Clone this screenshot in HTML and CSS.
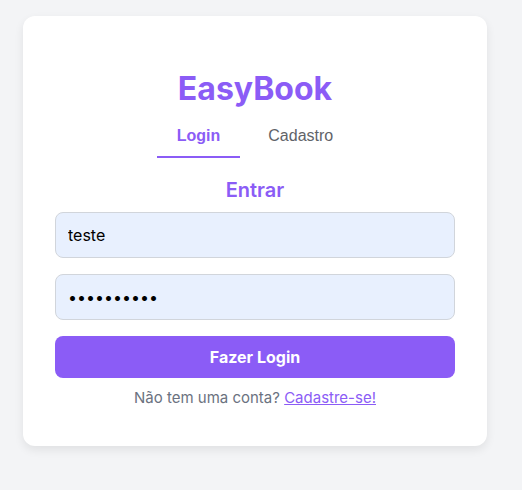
FILE: index.html
```html
<!DOCTYPE html>
<html lang="pt">
<head>
<meta charset="utf-8">
<link rel="stylesheet" href="styles.css">
</head>
<body>
<main class="card">
  <h1 class="brand">EasyBook</h1>
  <nav class="tabs">
    <button class="tab active">Login</button>
    <button class="tab">Cadastro</button>
  </nav>
  <h2 class="heading">Entrar</h2>
  <form class="form">
    <input class="field" type="text" value="teste">
    <input class="field pass" type="password" value="1234567890">
    <button class="submit" type="button">Fazer Login</button>
  </form>
  <p class="footer">Não tem uma conta? <a href="#">Cadastre-se!</a></p>
</main>
</body>
</html>
```
FILE: styles.css
```css
html, body { margin: 0; padding: 0; }
body {
  background: #f3f4f6;
  font-family: Inter, "Noto Sans", sans-serif;
  padding: 16px 0 0 23px;
  height: 490px;
  box-sizing: border-box;
}
.card {
  width: 464px;
  box-sizing: border-box;
  background: #fff;
  border-radius: 12px;
  box-shadow: 0 4px 10px rgba(0,0,0,0.08);
  padding: 54px 32px 38px;
}
.brand {
  margin: 0;
  text-align: center;
  font-size: 32px;
  line-height: 38px;
  font-weight: 700;
  color: #8b5cf6;
}
.tabs {
  display: flex;
  justify-content: center;
  gap: 8px;
  margin-top: 10px;
}
.tab {
  font-family: "Liberation Sans", Arial, sans-serif;
  background: none;
  border: none;
  border-bottom: 2px solid transparent;
  padding: 8px 20px 10px;
  font-size: 16px;
  line-height: 20px;
  color: #5f6368;
  cursor: pointer;
}
.tab.active {
  color: #8b5cf6;
  font-weight: 700;
  border-bottom-color: #8b5cf6;
}
.heading {
  margin: 20px 0 10px;
  text-align: center;
  font-size: 20px;
  line-height: 24px;
  font-weight: 600;
  color: #8b5cf6;
}
.form {
  display: flex;
  flex-direction: column;
}
.field {
  box-sizing: border-box;
  height: 46px;
  padding: 0 12px;
  border: 1px solid #d1d5db;
  border-radius: 8px;
  background: #e8f0fe;
  font-family: inherit;
  font-size: 16px;
  color: #000;
  margin-bottom: 16px;
}
.submit {
  height: 42px;
  border: none;
  border-radius: 8px;
  background: #8b5cf6;
  color: #fff;
  font-family: inherit;
  font-size: 16px;
  font-weight: 700;
}
.footer {
  margin: 10px 0 0;
  text-align: center;
  font-size: 15px;
  line-height: 20px;
  color: #6b7280;
}
.footer a { color: #8b5cf6; }
```
